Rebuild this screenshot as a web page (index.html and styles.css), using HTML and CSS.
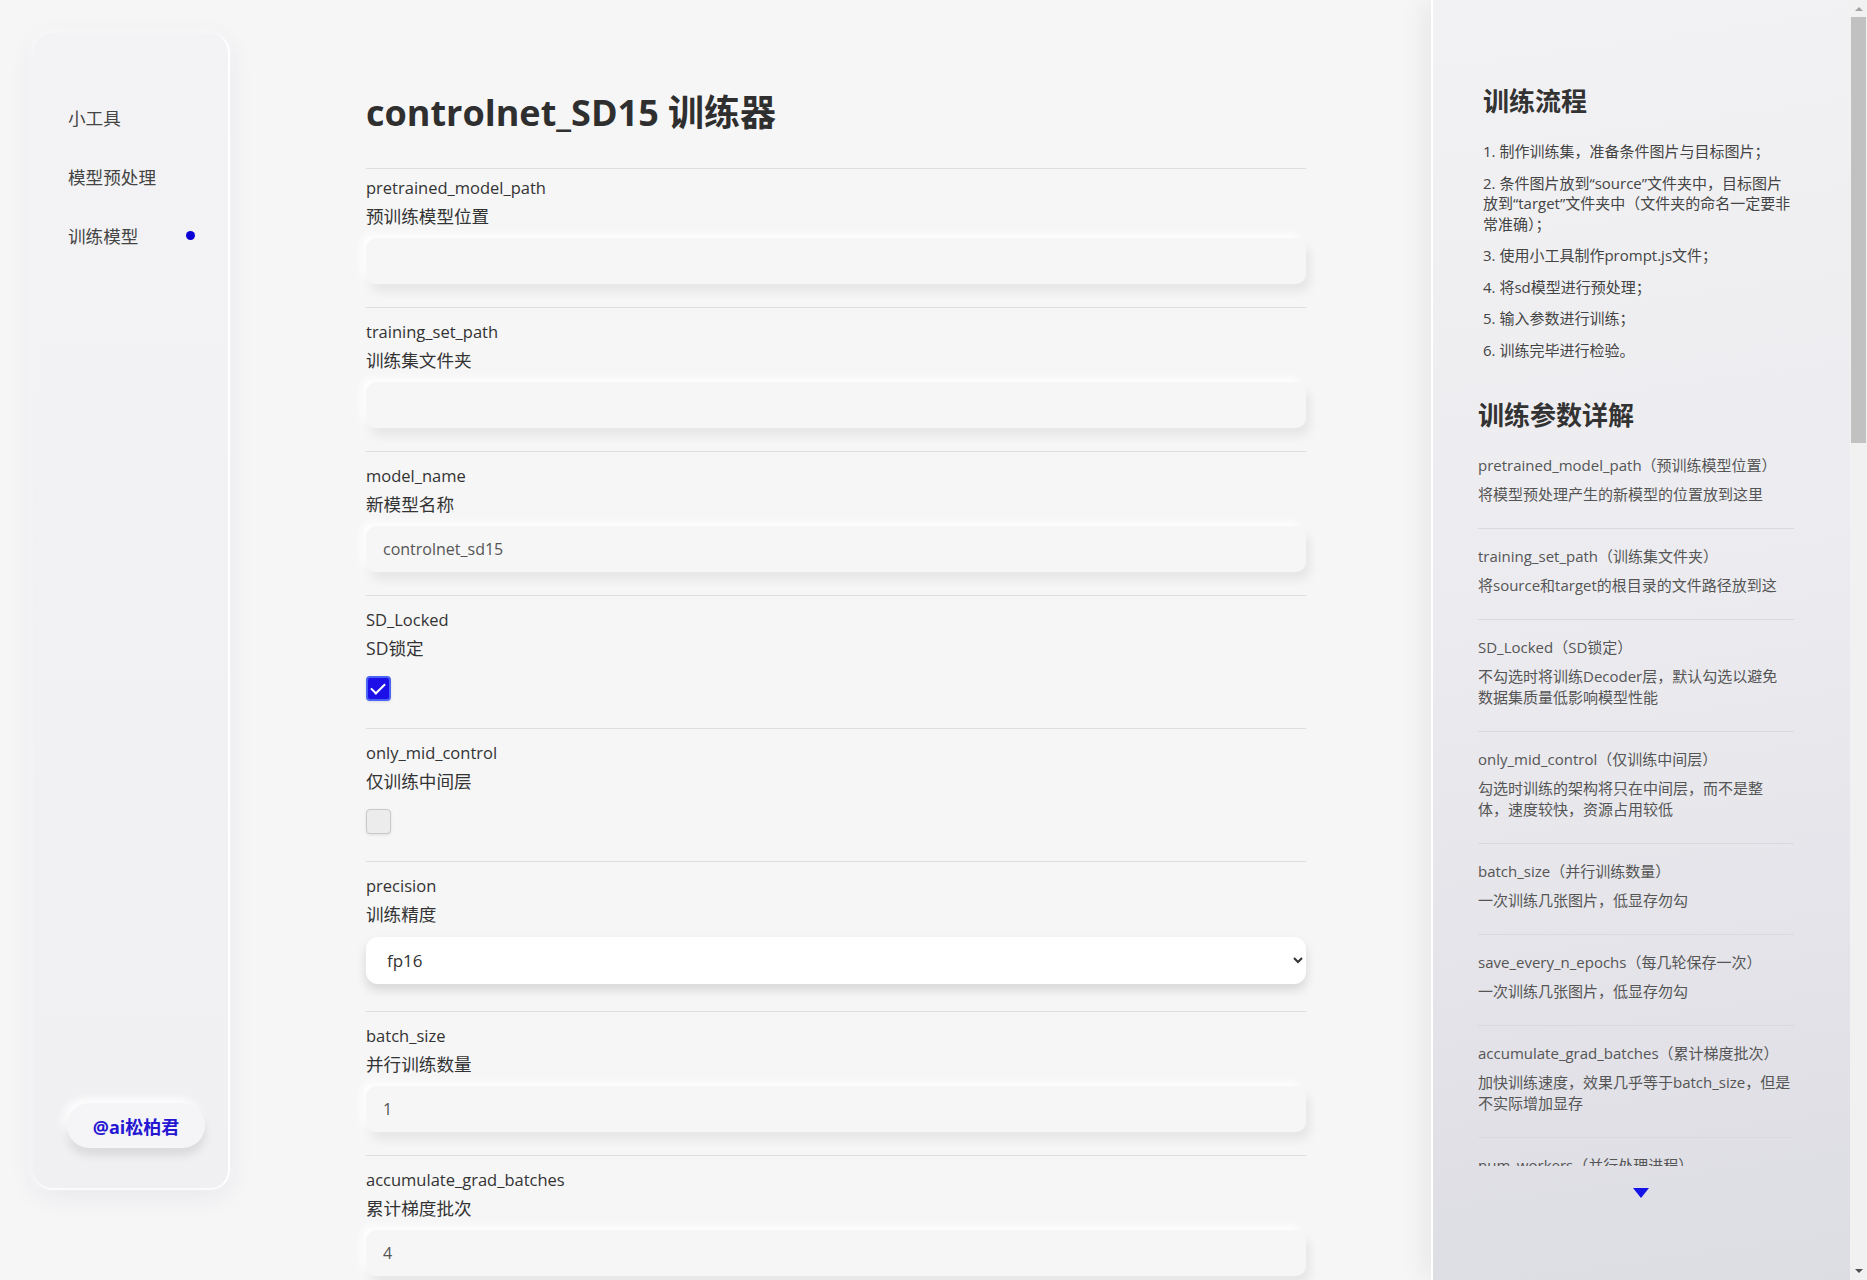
FILE: index.html
```html
<!DOCTYPE html>
<html lang="zh-CN">
<head>
<meta charset="utf-8">
<title>controlnet_SD15 训练器</title>
<link rel="stylesheet" href="styles.css">
</head>
<body>
<div class="app">
  <div class="workspace">
    <nav class="sidebar">
      <ul class="nav">
        <li class="nav-item">小工具</li>
        <li class="nav-item">模型预处理</li>
        <li class="nav-item active">训练模型<span class="nav-dot"></span></li>
      </ul>
      <div class="author">@ai松柏君</div>
    </nav>

    <main class="main">
      <h1 class="title">controlnet_SD15 训练器</h1>

      <section class="field first">
        <div class="field-name">pretrained_model_path</div>
        <div class="field-zh">预训练模型位置</div>
        <input class="text-input" type="text" value="">
      </section>

      <section class="field">
        <div class="field-name">training_set_path</div>
        <div class="field-zh">训练集文件夹</div>
        <input class="text-input" type="text" value="">
      </section>

      <section class="field">
        <div class="field-name">model_name</div>
        <div class="field-zh">新模型名称</div>
        <input class="text-input" type="text" value="controlnet_sd15">
      </section>

      <section class="field">
        <div class="field-name">SD_Locked</div>
        <div class="field-zh">SD锁定</div>
        <input class="check" type="checkbox" checked>
      </section>

      <section class="field">
        <div class="field-name">only_mid_control</div>
        <div class="field-zh">仅训练中间层</div>
        <input class="check" type="checkbox">
      </section>

      <section class="field">
        <div class="field-name">precision</div>
        <div class="field-zh">训练精度</div>
        <select class="select">
          <option>fp16</option>
          <option>fp32</option>
        </select>
      </section>

      <section class="field">
        <div class="field-name">batch_size</div>
        <div class="field-zh">并行训练数量</div>
        <input class="text-input" type="text" value="1">
      </section>

      <section class="field">
        <div class="field-name">accumulate_grad_batches</div>
        <div class="field-zh">累计梯度批次</div>
        <input class="text-input" type="text" value="4">
      </section>

      <section class="field">
        <div class="field-name">num_workers</div>
        <div class="field-zh">并行处理进程</div>
        <input class="text-input" type="text" value="0">
      </section>
    </main>
  </div>

  <aside class="guide">
    <h2 class="guide-title flow-title">训练流程</h2>
    <ol class="flow">
      <li>1. 制作训练集，准备条件图片与目标图片；</li>
      <li>2. 条件图片放到“source”文件夹中，目标图片<br>放到“target”文件夹中（文件夹的命名一定要非<br>常准确）；</li>
      <li>3. 使用小工具制作prompt.js文件；</li>
      <li>4. 将sd模型进行预处理；</li>
      <li>5. 输入参数进行训练；</li>
      <li>6. 训练完毕进行检验。</li>
    </ol>

    <h2 class="guide-title">训练参数详解</h2>
    <div class="params">
      <div class="param">
        <div class="param-name">pretrained_model_path（预训练模型位置）</div>
        <div class="param-desc">将模型预处理产生的新模型的位置放到这里</div>
      </div>
      <div class="param">
        <div class="param-name">training_set_path（训练集文件夹）</div>
        <div class="param-desc">将source和target的根目录的文件路径放到这</div>
      </div>
      <div class="param">
        <div class="param-name">SD_Locked（SD锁定）</div>
        <div class="param-desc">不勾选时将训练Decoder层，默认勾选以避免<br>数据集质量低影响模型性能</div>
      </div>
      <div class="param">
        <div class="param-name">only_mid_control（仅训练中间层）</div>
        <div class="param-desc">勾选时训练的架构将只在中间层，而不是整<br>体，速度较快，资源占用较低</div>
      </div>
      <div class="param">
        <div class="param-name">batch_size（并行训练数量）</div>
        <div class="param-desc">一次训练几张图片，低显存勿勾</div>
      </div>
      <div class="param">
        <div class="param-name">save_every_n_epochs（每几轮保存一次）</div>
        <div class="param-desc">一次训练几张图片，低显存勿勾</div>
      </div>
      <div class="param">
        <div class="param-name">accumulate_grad_batches（累计梯度批次）</div>
        <div class="param-desc">加快训练速度，效果几乎等于batch_size，但是<br>不实际增加显存</div>
      </div>
      <div class="param">
        <div class="param-name">num_workers（并行处理进程）</div>
        <div class="param-desc">数据加载使用的进程数量</div>
      </div>
    </div>
    <div class="more">
      <svg width="16" height="10" viewBox="0 0 16 10"><polygon points="0,0 16,0 8,10" fill="#1414e6"/></svg>
    </div>
  </aside>

  <div class="scrollbar">
    <div class="sb-arrow up"></div>
    <div class="sb-thumb"></div>
    <div class="sb-fill"></div>
    <div class="sb-arrow down"></div>
  </div>
</div>
</body>
</html>
```

FILE: styles.css
```css
* { box-sizing: border-box; }

html, body {
  margin: 0;
  padding: 0;
  height: 100%;
  overflow: hidden;
}

body {
  font-family: "Open Sans", "Noto Sans CJK SC", sans-serif;
  color: #333;
  background: #f6f6f7;
}

.app {
  display: flex;
  height: 100vh;
}

/* ---------- left workspace ---------- */
.workspace {
  flex: 1;
  display: flex;
  align-items: flex-start;
  padding: 33px 0 0 33px;
  background: #f6f6f7;
  overflow: hidden;
}

.sidebar {
  width: 197px;
  height: 1157px;
  flex: none;
  display: flex;
  flex-direction: column;
  padding-top: 55px;
  border-radius: 20px;
  background: linear-gradient(180deg, #f3f3f5 0%, #f0f0f3 100%);
  border-right: 2px solid #ffffff;
  border-bottom: 2px solid #fbfbfc;
  box-shadow: 0 6px 26px rgba(40, 40, 70, 0.07), -2px -2px 10px rgba(255, 255, 255, 0.8);
}

.nav {
  list-style: none;
  margin: 0;
  padding: 0;
}

.nav-item {
  height: 59px;
  display: flex;
  align-items: center;
  justify-content: space-between;
  padding: 0 33px 0 35px;
  font-size: 17.6px;
  color: #444;
}

.nav-dot {
  width: 9px;
  height: 9px;
  border-radius: 50%;
  background: #0a00d6;
}

.author {
  margin: auto 0 40px 34px;
  width: 138px;
  height: 45px;
  border-radius: 23px;
  display: flex;
  align-items: center;
  justify-content: center;
  font-size: 18px;
  font-weight: 700;
  color: #2516d2;
  background: #f5f5f7;
  box-shadow: 0 7px 10px rgba(0, 0, 0, 0.10), -4px -4px 10px #ffffff;
}

/* ---------- main form ---------- */
.main {
  width: 940px;
  flex: none;
  margin-left: 136px;
  padding-top: 55px;
}

.title {
  margin: 0 0 30px;
  font-size: 36px;
  line-height: 50px;
  font-weight: 700;
  color: #2f2f2f;
}

.field {
  border-top: 1px solid #dddddd;
  padding-top: 9px;
}

.field.first {
  padding-top: 4px;
}

.field-name,
.field-zh {
  line-height: 29px;
  color: #333;
}

.field-name {
  font-size: 16.5px;
}

.field-zh {
  font-size: 17.6px;
}

.text-input {
  display: block;
  width: 100%;
  height: 46px;
  margin: 7px 0 23px;
  padding: 0 17px;
  border: none;
  border-radius: 10px;
  outline: none;
  font-family: inherit;
  font-size: 16px;
  color: #555;
  background: #f6f6f6;
  box-shadow: 4px 8px 11px rgba(0, 0, 0, 0.065), -5px -4px 8px rgba(255, 255, 255, 0.95);
}

.check {
  display: block;
  appearance: none;
  -webkit-appearance: none;
  width: 25px;
  height: 25px;
  margin: 13px 0 27px;
  border-radius: 4px;
  border: 1.5px solid #c9c9c9;
  background: #ececec;
  box-shadow: 0 1px 3px rgba(0, 0, 0, 0.1);
  position: relative;
}

.check:checked {
  background: #1c0fe8;
  border: 2px solid #4a62f5;
}

.check:checked::after {
  content: "";
  position: absolute;
  left: 6px;
  top: 2px;
  width: 6px;
  height: 12px;
  border-right: 2.5px solid #fff;
  border-bottom: 2.5px solid #fff;
  transform: rotate(45deg);
}

.select {
  display: block;
  width: 100%;
  height: 47px;
  margin: 8px 0 27px;
  padding: 0 8px 0 17px;
  border: none;
  border-radius: 12px;
  outline: none;
  font-family: inherit;
  font-size: 17px;
  color: #333;
  background: #ffffff;
  box-shadow: 0 6px 11px rgba(0, 0, 0, 0.13);
}

/* ---------- right guide panel ---------- */
.guide {
  width: 419px;
  flex: none;
  padding: 83px 56px 0 45px;
  background: linear-gradient(172deg, #f2f2f4 0%, #ececf0 45%, #dcdce3 100%);
  border-left: 2px solid #ffffff;
  box-shadow: -10px 0 22px rgba(0, 0, 0, 0.05);
  overflow: hidden;
}

.guide-title {
  margin: 37px 0 0;
  font-size: 26px;
  line-height: 36px;
  font-weight: 700;
  color: #333;
}

.guide-title.flow-title {
  margin: 0 0 0 5px;
}

.flow {
  list-style: none;
  margin: 22px 0 0 5px;
  padding: 0;
  width: 330px;
  font-size: 15px;
  line-height: 20.5px;
  color: #444;
}

.flow li {
  margin-bottom: 11px;
}

.flow li:last-child {
  margin-bottom: 0;
}

.params {
  margin-top: 5px;
  height: 728px;
  overflow: hidden;
  width: 316px;
}

.param {
  padding: 17px 0 23px;
  border-bottom: 1px solid #d9d9de;
  font-size: 15px;
  color: #555;
  white-space: nowrap;
}

.param-name {
  line-height: 20px;
  margin-bottom: 9px;
}

.param-desc {
  line-height: 21px;
}

.more {
  width: 316px;
  margin-top: 22px;
  padding-left: 10px;
  display: flex;
  justify-content: center;
}

.more svg {
  display: block;
}

/* ---------- page scrollbar ---------- */
.scrollbar {
  width: 17px;
  flex: none;
  display: flex;
  flex-direction: column;
  align-items: center;
  background: #f1f1f1;
}

.sb-arrow {
  width: 0;
  height: 0;
  border-left: 4px solid transparent;
  border-right: 4px solid transparent;
  flex: none;
}

.sb-arrow.up {
  margin: 7px 0 6px;
  border-bottom: 4px solid #a3a3a3;
}

.sb-arrow.down {
  margin: 6px 0 7px;
  border-top: 4px solid #505050;
}

.sb-thumb {
  width: 15px;
  height: 426px;
  flex: none;
  background: #c1c1c1;
}

.sb-fill {
  flex: 1;
}
```
